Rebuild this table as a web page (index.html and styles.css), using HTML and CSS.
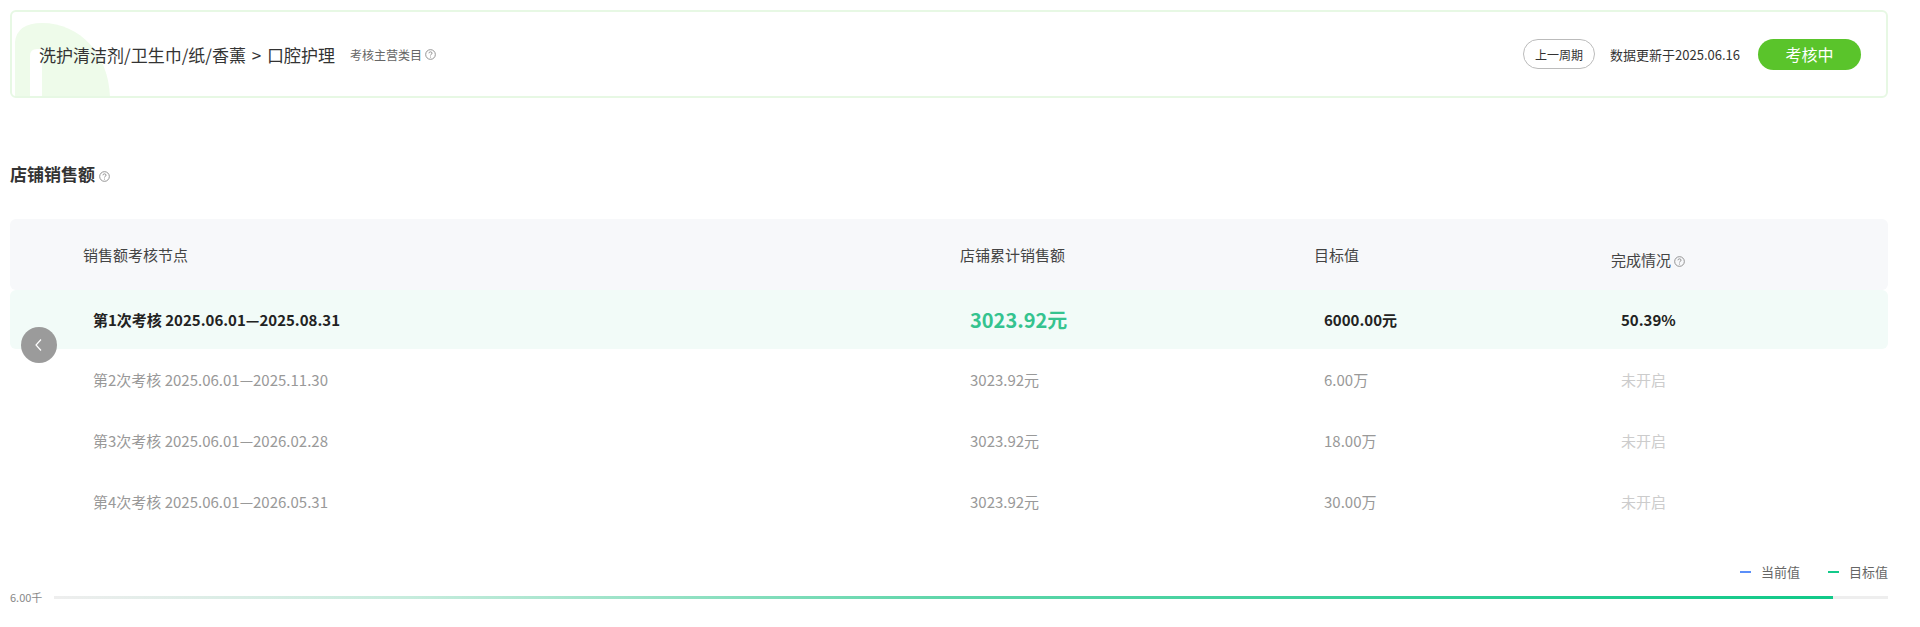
FILE: index.html
```html
<!DOCTYPE html>
<html>
<head>
    <title>店铺销售额考核</title>
    <link rel="stylesheet" href="styles.css">
</head>
<body>
    <div class="page">
        <div class="category-card">
            <svg class="card-deco" width="100" height="88" viewBox="0 0 100 88">
                <path d="M3 88 V30 Q5 11 30 11 C70 11 98 45 98 88 Z" fill="#eefbea"/>
                <path d="M18 88 V44 Q18 37 25 37 H30 V88 Z" fill="#ffffff"/>
            </svg>
            <div class="category-info">
                <span class="category-path">洗护清洁剂/卫生巾/纸/香薰 &gt; 口腔护理</span>
                <span class="category-tag">考核主营类目</span>
                <svg class="help-icon" width="11" height="11" viewBox="0 0 10 10">
                    <circle cx="5" cy="5" r="4.4" fill="none" stroke="#888" stroke-width="0.8"/>
                    <path d="M3.6 3.9 Q3.6 2.6 5 2.6 Q6.4 2.6 6.4 3.8 Q6.4 4.6 5.4 5 Q5 5.2 5 5.9" fill="none" stroke="#888" stroke-width="0.8"/>
                    <circle cx="5" cy="7.3" r="0.5" fill="#888"/>
                </svg>
            </div>
            <div class="card-actions">
                <button class="prev-button">上一周期</button>
                <span class="update-time">数据更新于2025.06.16</span>
                <button class="status-button">考核中</button>
            </div>
        </div>

        <h2 class="section-title">店铺销售额
            <svg class="help-icon" width="11" height="11" viewBox="0 0 10 10">
                <circle cx="5" cy="5" r="4.4" fill="none" stroke="#888" stroke-width="0.8"/>
                <path d="M3.6 3.9 Q3.6 2.6 5 2.6 Q6.4 2.6 6.4 3.8 Q6.4 4.6 5.4 5 Q5 5.2 5 5.9" fill="none" stroke="#888" stroke-width="0.8"/>
                <circle cx="5" cy="7.3" r="0.5" fill="#888"/>
            </svg>
        </h2>

        <div class="sales-table">
            <div class="table-head">
                <span>销售额考核节点</span>
                <span>店铺累计销售额</span>
                <span>目标值</span>
                <span class="head-status">完成情况
                    <svg class="help-icon" width="11" height="11" viewBox="0 0 10 10">
                        <circle cx="5" cy="5" r="4.4" fill="none" stroke="#888" stroke-width="0.8"/>
                        <path d="M3.6 3.9 Q3.6 2.6 5 2.6 Q6.4 2.6 6.4 3.8 Q6.4 4.6 5.4 5 Q5 5.2 5 5.9" fill="none" stroke="#888" stroke-width="0.8"/>
                        <circle cx="5" cy="7.3" r="0.5" fill="#888"/>
                    </svg>
                </span>
            </div>
            <div class="table-row active">
                <span>第1次考核 2025.06.01—2025.08.31</span>
                <span class="sales-value">3023.92元</span>
                <span>6000.00元</span>
                <span>50.39%</span>
            </div>
            <div class="table-row">
                <span>第2次考核 2025.06.01—2025.11.30</span>
                <span>3023.92元</span>
                <span>6.00万</span>
                <span class="not-started">未开启</span>
            </div>
            <div class="table-row">
                <span>第3次考核 2025.06.01—2026.02.28</span>
                <span>3023.92元</span>
                <span>18.00万</span>
                <span class="not-started">未开启</span>
            </div>
            <div class="table-row">
                <span>第4次考核 2025.06.01—2026.05.31</span>
                <span>3023.92元</span>
                <span>30.00万</span>
                <span class="not-started">未开启</span>
            </div>
            <button class="scroll-left">
                <svg width="12" height="14" viewBox="0 0 12 14">
                    <path d="M8 1.5 L3 7 L8 12.5" fill="none" stroke="#fff" stroke-width="1.2"/>
                </svg>
            </button>
        </div>

        <div class="legend">
            <span class="legend-item"><i class="dash current"></i>当前值</span>
            <span class="legend-item"><i class="dash target"></i>目标值</span>
        </div>

        <div class="axis">
            <span class="axis-label">6.00千</span>
            <div class="axis-track">
                <div class="axis-fill" style="width: 97%"></div>
            </div>
        </div>
    </div>
</body>
</html>
```

FILE: styles.css
```css
body {
    margin: 0;
    padding: 0;
    background-color: #ffffff;
    font-family: "Noto Sans CJK SC", "Liberation Sans", sans-serif;
    color: #333;
}

.page {
    padding: 10px 32px 0 10px;
}

.category-card {
    position: relative;
    display: flex;
    align-items: center;
    justify-content: space-between;
    height: 84px;
    padding: 0 25px 0 27px;
    border: 2px solid #e7f8e4;
    border-radius: 6px;
    overflow: hidden;
}

.card-deco {
    position: absolute;
    left: 0;
    top: 0;
}

.category-info {
    position: relative;
    display: flex;
    align-items: center;
}

.category-path {
    font-size: 17px;
    color: #333;
    word-spacing: 2px;
}

.category-tag {
    font-size: 12px;
    color: #666;
    margin-left: 15px;
    margin-right: 3px;
}

.help-icon {
    display: inline-block;
    vertical-align: middle;
}

.card-actions {
    display: flex;
    align-items: center;
}

.prev-button {
    height: 30px;
    padding: 0 11px;
    border: 1px solid #bbb;
    border-radius: 15px;
    background: #fff;
    font-family: inherit;
    font-size: 12px;
    color: #333;
}

.update-time {
    font-size: 13px;
    color: #333;
    margin: 0 18px 0 15px;
}

.status-button {
    width: 103px;
    height: 31px;
    border: none;
    border-radius: 16px;
    background-color: #5ac42b;
    font-family: inherit;
    font-size: 16px;
    color: #fff;
}

.section-title {
    margin: 64px 0 33px 0;
    font-size: 17px;
    line-height: 24px;
    font-weight: bold;
    color: #333;
}

.section-title .help-icon {
    margin-left: 0;
}

.sales-table {
    position: relative;
}

.table-head,
.table-row {
    display: grid;
    grid-template-columns: 877px 354px 297px 1fr;
    align-items: center;
    font-size: 15px;
}

.table-head {
    height: 71px;
    padding-left: 73px;
    background-color: #f7f8fa;
    border-radius: 6px;
    color: #444;
}

.head-status {
    padding-top: 10px;
}

.table-row {
    height: 61px;
    padding-left: 83px;
    color: #999;
}

.table-row.active {
    height: 59px;
    background-color: #f2fbf8;
    border-radius: 6px;
    color: #222;
    font-weight: bold;
}

.sales-value {
    font-size: 20px;
    color: #35c38f;
}

.not-started {
    color: #ccc;
}

.scroll-left {
    position: absolute;
    left: 11px;
    top: 108px;
    width: 36px;
    height: 36px;
    padding: 0;
    border: none;
    border-radius: 50%;
    background-color: #9b9b9b;
    display: flex;
    align-items: center;
    justify-content: center;
}

.legend {
    display: flex;
    justify-content: flex-end;
    gap: 28px;
    margin-top: 31px;
    font-size: 13px;
    line-height: 18px;
    color: #666;
}

.legend-item {
    display: flex;
    align-items: center;
}

.dash {
    display: inline-block;
    width: 11px;
    height: 2px;
    margin-right: 10px;
}

.dash.current {
    background-color: #5b8ff9;
}

.dash.target {
    background-color: #13c98a;
}

.axis {
    display: flex;
    align-items: center;
    margin-top: 8px;
}

.axis-label {
    font-size: 11px;
    color: #888;
    width: 44px;
}

.axis-track {
    flex: 1;
    height: 3px;
    background-color: #eeeeee;
}

.axis-fill {
    height: 3px;
    background: linear-gradient(to right, #eeeeee 0%, #c6ecdd 20%, #5fd6aa 50%, #10c988 100%);
}
```
